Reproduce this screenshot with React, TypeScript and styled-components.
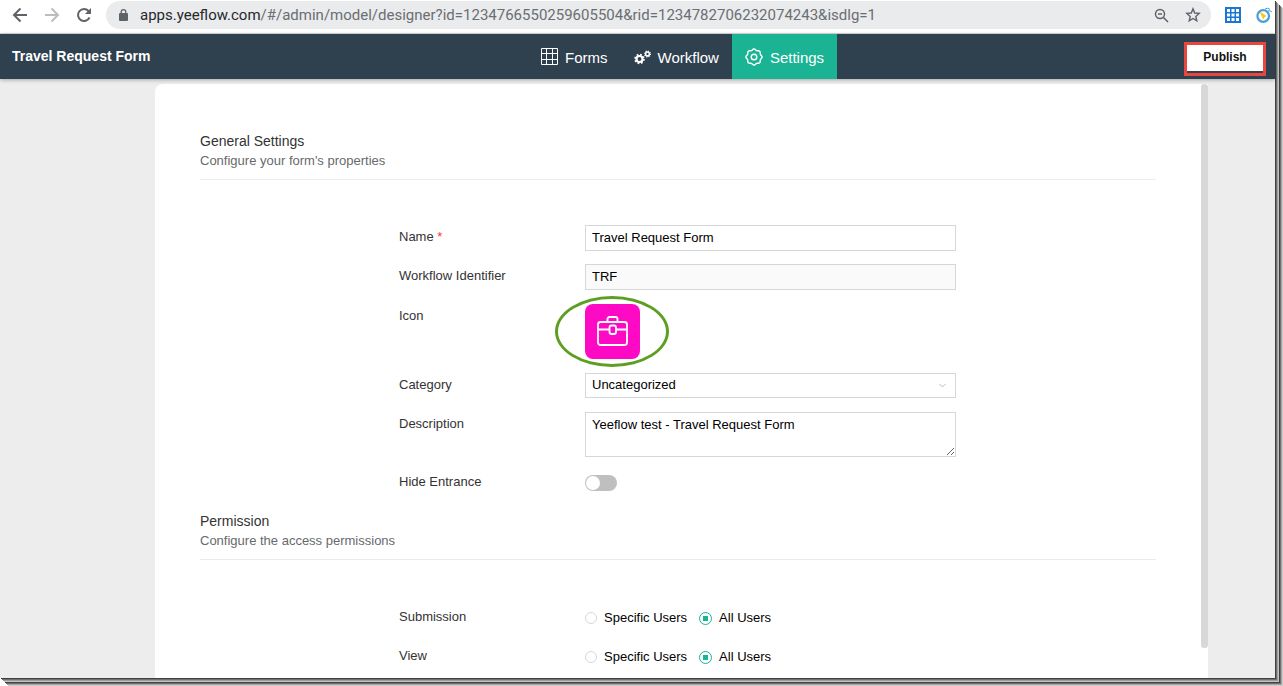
import React from "react";
import styled, { createGlobalStyle } from "styled-components";

const Global = createGlobalStyle`
  *, *::before, *::after { box-sizing: border-box; }
  body { margin: 0; background: #fff; font-family: "Liberation Sans", Arial, sans-serif; font-size: 13px; color: #333; }
  button, input, select, textarea { font: inherit; margin: 0; }
`;

const Backdrop = styled.div`
  height: 100vh;
  padding: 0 8px 8px 0;
  overflow: hidden;
`;

const Window = styled.div`
  display: flex;
  flex-direction: column;
  height: 100%;
  background: #ededed;
  box-shadow: 1px 1px 0 #404040, 2px 2px 0 #707070, 3px 3px 0 #9c9c9c, 4px 4px 0 #c4c4c4,
    5px 5px 0 #404040, 6px 6px 0 #707070, 7px 7px 0 #a4a4a4, 8px 8px 0 #cccccc;
`;

const BrowserBar = styled.div`
  display: flex;
  flex: none;
  align-items: center;
  height: 34px;
  padding: 0 3px 3px 12px;
  background: #fff;
  border-bottom: 1px solid #d5dadb;
  overflow: hidden;
`;

const BarButton = styled.button<{ $muted?: boolean }>`
  display: flex;
  padding: 0;
  margin-right: 16px;
  border: 0;
  background: none;
  color: ${(p) => (p.$muted ? "#babcbe" : "#5f6368")};
`;

const AddressBar = styled.div`
  display: flex;
  flex: 1;
  align-items: center;
  gap: 12px;
  height: 28px;
  margin: 0 14px 0 -2px;
  padding: 0 10px 0 12px;
  border-radius: 14px;
  background: #e9ebed;
  color: #5f6368;
`;

const Url = styled.span`
  flex: 1;
  font-family: Roboto, "Open Sans", sans-serif;
  font-size: 15px;
  white-space: nowrap;
  color: #6b6e72;
  b { font-weight: 400; color: #26282b; }
`;

const Extensions = styled.div`
  display: flex;
  align-items: center;
  gap: 15px;
`;

const Header = styled.header`
  display: flex;
  flex: none;
  height: 45px;
  padding: 0 9px 0 12px;
  background: #2f404f;
  box-shadow: 0 1px 4px rgba(0, 0, 0, 0.3);
  color: #fff;
`;

const Title = styled.h1`
  width: 516px;
  margin: 0;
  font-size: 14px;
  line-height: 44px;
  font-weight: 700;
`;

const Tabs = styled.nav`
  display: flex;
`;

const Tab = styled.a<{ $active?: boolean }>`
  display: flex;
  align-items: center;
  gap: 7px;
  padding: 0 13px;
  background: ${(p) => (p.$active ? "#1ab394" : "transparent")};
  color: #fff;
  font-size: 15px;
  line-height: 20px;
  text-decoration: none;
  span { padding-top: 2px; }
`;

const Highlight = styled.div`
  align-self: flex-end;
  margin: 0 0 3px auto;
  border: 3px solid #e8473f;
  padding-bottom: 2px;
`;

const Publish = styled.button`
  display: block;
  width: 76px;
  height: 26px;
  padding: 0 0 2px;
  border: 0;
  background: #fff;
  color: #111;
  font-size: 12px;
  font-weight: 700;
`;

const Main = styled.main`
  display: flex;
  flex: 1;
  min-height: 0;
  padding: 5px 67px 0 155px;
`;

const Card = styled.form`
  flex: 1;
  padding: 47px 45px 0;
  border-radius: 8px 0 0 0;
  background: #fff;
  overflow: hidden;
`;

const ScrollTrack = styled.div`
  width: 7px;
  background: #fff;
`;

const ScrollThumb = styled.div`
  height: 95%;
  border-radius: 3px;
  background: #d8d8d8;
`;

const Section = styled.section``;

const SectionHead = styled.header`
  height: 49px;
  border-bottom: 1px solid #ebebeb;
`;

const SectionTitle = styled.h2`
  margin: 0;
  font-size: 14px;
  line-height: 20px;
  font-weight: 400;
  color: #333;
`;

const SectionNote = styled.p`
  margin: 0;
  font-size: 13px;
  line-height: 20px;
  color: #676a6c;
`;

const Rows = styled.div`
  display: flex;
  flex-direction: column;
  gap: 13px;
  max-width: 558px;
  margin: 0 auto;
  padding: 45px 0 15px;
`;

const Row = styled.div`
  display: grid;
  grid-template-columns: 186px minmax(0, 371px);
  min-height: 26px;
`;

const IconRow = styled(Row)`
  padding-top: 1px;
`;

const Label = styled.label`
  line-height: 24px;
  font-size: 13px;
  color: #333;
`;

const Required = styled.span`
  color: #f33;
`;

const Input = styled.input`
  width: 100%;
  height: 26px;
  padding: 0 6px 2px;
  border: 1px solid #d5d7d9;
  border-radius: 0;
  background: #fff;
  color: #000;
  &:read-only { background: #fafafa; }
`;

const SelectWrap = styled.div`
  position: relative;
  svg { position: absolute; right: 10px; top: 9px; pointer-events: none; }
`;

const Select = styled.select`
  display: block;
  width: 100%;
  height: 25px;
  padding: 0 6px 2px;
  appearance: none;
  border: 1px solid #d5d7d9;
  border-radius: 0;
  background: #fff;
  color: #000;
`;

const TextArea = styled.textarea`
  display: block;
  width: 100%;
  height: 45px;
  padding: 4px 6px;
  border: 1px solid #d5d7d9;
  background: #fff;
  color: #000;
  line-height: 16px;
`;

const IconHolder = styled.div`
  position: relative;
  height: 56px;
`;

const IconButton = styled.button`
  display: flex;
  align-items: center;
  justify-content: center;
  width: 55px;
  height: 55px;
  padding: 0;
  border: 0;
  border-radius: 8px;
  background: #ff0ac4;
`;

const Ring = styled.span`
  position: absolute;
  left: -30px;
  top: -8px;
  width: 114px;
  height: 71px;
  border: 3px solid #5d9f22;
  border-radius: 50%;
  pointer-events: none;
`;

const Switch = styled.input`
  appearance: none;
  width: 32px;
  height: 16px;
  margin-top: 5px !important;
  border-radius: 8px;
  background: #bfbfbf;
  &::before {
    content: "";
    display: block;
    width: 14px;
    height: 14px;
    margin: 1px;
    border-radius: 50%;
    background: #fff;
  }
  &:checked { background: #1ab394; }
  &:checked::before { margin-left: 17px; }
`;

const Options = styled.div`
  display: flex;
  gap: 12px;
`;

const Option = styled.label`
  display: flex;
  align-items: center;
  gap: 7px;
  height: 24px;
  color: #000;
`;

const Radio = styled.input`
  display: grid;
  place-items: center;
  appearance: none;
  width: 12px;
  height: 12px;
  margin-top: 2px !important;
  border: 1px solid #d5d7d9;
  border-radius: 50%;
  &:checked { width: 13px; height: 13px; border-color: #1ab394; }
  &:checked::before { content: ""; width: 5px; height: 5px; background: #1ab394; }
`;

const LOBES = 8;

const gearOutline = Array.from({ length: LOBES * 12 }, (_, i) => {
  const angle = (i / (LOBES * 12)) * Math.PI * 2;
  const radius = 7.5 + 0.6 * Math.cos(angle * LOBES);
  return `${(9 + radius * Math.cos(angle)).toFixed(2)},${(9 + radius * Math.sin(angle)).toFixed(2)}`;
}).join(" ");

const GearIcon = () => (
  <svg width="18" height="18" viewBox="0 0 18 18" fill="none" stroke="currentColor" strokeWidth="1.4" strokeLinejoin="round" aria-hidden="true">
    <polygon points={gearOutline} />
    <circle cx="9" cy="9" r="2.8" />
  </svg>
);

const Cogs = () => (
  <svg width="17" height="16" viewBox="0 0 17 16" fill="none" stroke="currentColor" aria-hidden="true">
    <circle cx="5.5" cy="10" r="3" strokeWidth="2.2" />
    <circle cx="5.5" cy="10" r="4.5" strokeWidth="1.6" strokeDasharray="1.77 1.77" />
    <circle cx="13.5" cy="5" r="1.9" strokeWidth="1.5" />
    <circle cx="13.5" cy="5" r="2.9" strokeWidth="1.2" strokeDasharray="1.14 1.14" />
  </svg>
);

const GridIcon = () => (
  <svg width="17" height="17" viewBox="0 0 17 17" fill="none" stroke="currentColor" aria-hidden="true">
    <path d="M.5.5h16v16H.5zM.5 5.5h16M.5 11.5h16M5.5.5v16M11.5.5v16" />
  </svg>
);

function UserChoice({ name, label }: { name: string; label: string }) {
  return (
    <Row role="radiogroup" aria-label={label}>
      <Label as="span">{label}</Label>
      <Options>
        <Option><Radio type="radio" name={name} />Specific Users</Option>
        <Option><Radio type="radio" name={name} defaultChecked />All Users</Option>
      </Options>
    </Row>
  );
}

export default function App() {
  return (
    <Backdrop>
      <Global />
      <Window>
        <BrowserBar>
          <BarButton aria-label="Back">
            <svg width="16" height="16" viewBox="0 0 16 16" fill="none" stroke="currentColor" strokeWidth="2"><path d="M15 8H2M8.5 1.5L2 8l6.5 6.5" /></svg>
          </BarButton>
          <BarButton $muted aria-label="Forward">
            <svg width="16" height="16" viewBox="0 0 16 16" fill="none" stroke="currentColor" strokeWidth="2"><path d="M1 8h13M7.5 1.5L14 8l-6.5 6.5" /></svg>
          </BarButton>
          <BarButton aria-label="Reload">
            <svg width="16" height="16" viewBox="0 0 16 16" fill="none" stroke="currentColor" strokeWidth="2"><path d="M13.5 10.5A6 6 0 1 1 12.5 4l1.5 1.8" /><path d="M15 1v6H9z" fill="currentColor" stroke="none" /></svg>
          </BarButton>
          <AddressBar>
            <svg width="10" height="12" viewBox="0 0 10 12" aria-hidden="true"><rect x="1" y="4" width="9" height="8" rx="1" fill="#5f6368" /><path d="M3.2 5V3a2.2 2.2 0 0 1 4.6 0v2" fill="none" stroke="#5f6368" strokeWidth="1.3" /></svg>
            <Url><b>apps.yeeflow.com</b>/#/admin/model/designer?id=1234766550259605504&amp;rid=1234782706232074243&amp;isdlg=1</Url>
            <svg width="15" height="15" viewBox="0 0 15 15" fill="none" stroke="currentColor" strokeWidth="1.5" aria-hidden="true"><circle cx="6" cy="6" r="4.5" /><path d="M9.5 9.5L14 14M4 6h4" /></svg>
            <svg width="20" height="16" viewBox="-4 0 20 16" fill="none" stroke="currentColor" strokeWidth="1.4" aria-hidden="true"><path d="M8 1.8l1.7 4.2 4.5.4-3.4 3 1 4.4L8 11.5l-3.8 2.3 1-4.4-3.4-3 4.5-.4z" /></svg>
          </AddressBar>
          <Extensions>
            <svg width="16" height="16" viewBox="0 0 16 16" aria-hidden="true"><path d="M0 0h16v16H0z" fill="#1976d2" /><path d="M2 2h3v3H2zM6.5 2h3v3h-3zM11 2h3v3h-3zM2 6.5h3v3H2zM6.5 6.5h3v3h-3zM11 6.5h3v3h-3zM2 11h3v3H2zM6.5 11h3v3h-3zM11 11h3v3h-3z" fill="#fff" /></svg>
            <svg width="16" height="16" viewBox="0 0 16 16" fill="none" aria-hidden="true"><circle cx="7.2" cy="9" r="5.8" stroke="#4a9fd4" strokeWidth="2.2" /><path d="M4.5 5.5l5.5 3.5-2 .7-.5 2.3z" fill="#f8c81c" stroke="#f8c81c" /><path d="M9 2q3-2 5 .5M12 4q2-1 4 1" stroke="#4a9fd4" /></svg>
          </Extensions>
        </BrowserBar>
        <Header>
          <Title>Travel Request Form</Title>
          <Tabs>
            <Tab href="#forms"><GridIcon /><span>Forms</span></Tab>
            <Tab href="#workflow"><Cogs /><span>Workflow</span></Tab>
            <Tab href="#settings" $active><GearIcon /><span>Settings</span></Tab>
          </Tabs>
          <Highlight><Publish type="button">Publish</Publish></Highlight>
        </Header>
        <Main>
          <Card>
            <Section>
              <SectionHead>
                <SectionTitle>General Settings</SectionTitle>
                <SectionNote>Configure your form's properties</SectionNote>
              </SectionHead>
              <Rows>
                <Row>
                  <Label htmlFor="name">Name <Required>*</Required></Label>
                  <Input id="name" defaultValue="Travel Request Form" />
                </Row>
                <Row>
                  <Label htmlFor="identifier">Workflow Identifier</Label>
                  <Input id="identifier" value="TRF" readOnly />
                </Row>
                <IconRow>
                  <Label htmlFor="icon">Icon</Label>
                  <IconHolder>
                    <IconButton id="icon" type="button">
                      <svg width="33" height="33" viewBox="-1 0 33 33" fill="none" stroke="#fff" strokeWidth="1.8" aria-hidden="true">
                        <rect x="1" y="7" width="29" height="23" rx="2.5" />
                        <path d="M10.5 7V4a2 2 0 0 1 2-2h6a2 2 0 0 1 2 2v3M1 14.5h11M19 14.5h11" />
                        <rect x="12.5" y="10.5" width="6.5" height="8.5" rx="2" />
                      </svg>
                    </IconButton>
                    <Ring />
                  </IconHolder>
                </IconRow>
                <Row>
                  <Label htmlFor="category">Category</Label>
                  <SelectWrap>
                    <Select id="category"><option>Uncategorized</option></Select>
                    <svg width="7" height="7" viewBox="0 0 7 7" fill="none" stroke="#b8bcc0" aria-hidden="true"><path d="M.5 2l3 3 3-3" /></svg>
                  </SelectWrap>
                </Row>
                <Row>
                  <Label htmlFor="description">Description</Label>
                  <TextArea id="description" defaultValue="Yeeflow test - Travel Request Form" />
                </Row>
                <Row>
                  <Label htmlFor="hide">Hide Entrance</Label>
                  <Switch id="hide" type="checkbox" role="switch" />
                </Row>
              </Rows>
            </Section>
            <Section>
              <SectionHead>
                <SectionTitle>Permission</SectionTitle>
                <SectionNote>Configure the access permissions</SectionNote>
              </SectionHead>
              <Rows>
                <UserChoice name="submission" label="Submission" />
                <UserChoice name="view" label="View" />
              </Rows>
            </Section>
          </Card>
          <ScrollTrack><ScrollThumb /></ScrollTrack>
        </Main>
      </Window>
    </Backdrop>
  );
}
